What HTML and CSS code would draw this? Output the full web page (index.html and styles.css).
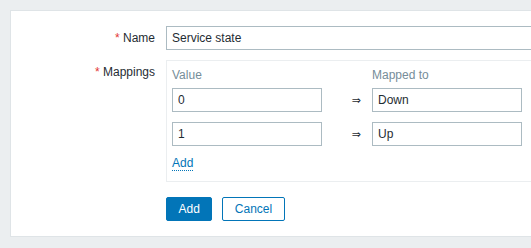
FILE: index.html
```html
<!DOCTYPE html>
<html>
<head>
<meta charset="utf-8">
<link rel="stylesheet" href="styles.css">
</head>
<body>
<div class="panel">
  <div class="form">
    <div class="label"><span class="req">*</span> Name</div>
    <div class="field"><input class="text name" type="text" value="Service state"></div>

    <div class="label"><span class="req">*</span> Mappings</div>
    <div class="field">
      <div class="mappings">
        <div class="mrow head">
          <div class="col">Value</div>
          <div class="arrow"></div>
          <div class="col">Mapped to</div>
        </div>
        <div class="mrow">
          <input class="text col" type="text" value="0">
          <div class="arrow">⇒</div>
          <input class="text col" type="text" value="Down">
        </div>
        <div class="mrow">
          <input class="text col" type="text" value="1">
          <div class="arrow">⇒</div>
          <input class="text col" type="text" value="Up">
        </div>
        <div class="addrow"><a class="link" href="#">Add</a></div>
      </div>
    </div>

    <div class="label"></div>
    <div class="field buttons">
      <button class="btn primary" type="button">Add</button>
      <button class="btn secondary" type="button">Cancel</button>
    </div>
  </div>
</div>
</body>
</html>
```
FILE: styles.css
```css
html, body {
  margin: 0;
  padding: 0;
}
body {
  background: #ebeef0;
  font-family: "Liberation Sans", Arial, sans-serif;
  font-size: 12px;
  color: #1f2c33;
  overflow: hidden;
  width: 531px;
  height: 248px;
}
.panel {
  margin: 10px 0 0 10px;
  width: 521px;
  background: #ffffff;
  border: 1px solid #dfe4e7;
  border-right: none;
  padding: 10px;
  box-sizing: border-box;
  height: 227px;
  overflow: hidden;
}
.form {
  display: grid;
  grid-template-columns: 134px 354px;
  column-gap: 11px;
  row-gap: 10px;
  padding-top: 5px;
}
.field {
  min-width: 0;
}
.label {
  text-align: right;
  line-height: 14px;
  padding-top: 5px;
}
.req {
  color: #e33734;
}
.text {
  box-sizing: border-box;
  height: 24px;
  border: 1px solid #acbbc2;
  background: #ffffff;
  padding: 0 5px;
  font-family: "Liberation Sans", Arial, sans-serif;
  font-size: 12px;
  color: #1f2c33;
  margin: 0;
  outline: none;
}
.name {
  width: 453px;
  display: block;
}
.mappings {
  width: 400px;
  border: 1px solid #ebeef0;
  padding: 5px 5px 11px 5px;
}
.mrow {
  display: flex;
  align-items: center;
  margin-bottom: 10px;
}
.mrow.head {
  color: #768d99;
  line-height: 14px;
  padding-top: 2px;
  margin-bottom: 6px;
}
.col {
  width: 150px;
  flex: none;
}
.arrow {
  width: 50px;
  flex: none;
  box-sizing: border-box;
  text-align: right;
  padding-right: 11px;
  font-family: "DejaVu Sans", sans-serif;
  font-size: 11px;
}
.addrow {
  line-height: 14px;
  margin-top: 1px;
}
.link {
  color: #0275b8;
  text-decoration: none;
  border-bottom: 1px dotted #0275b8;
}
.buttons {
  display: flex;
  gap: 10px;
  padding-top: 5px;
}
.btn {
  box-sizing: border-box;
  height: 24px;
  padding: 0 11.5px;
  border-radius: 2px;
  font-family: "Liberation Sans", Arial, sans-serif;
  font-size: 12px;
  border: 1px solid #0275b8;
  margin: 0;
}
.primary {
  background: #0275b8;
  color: #ffffff;
}
.secondary {
  background: #ffffff;
  color: #0275b8;
}
```
